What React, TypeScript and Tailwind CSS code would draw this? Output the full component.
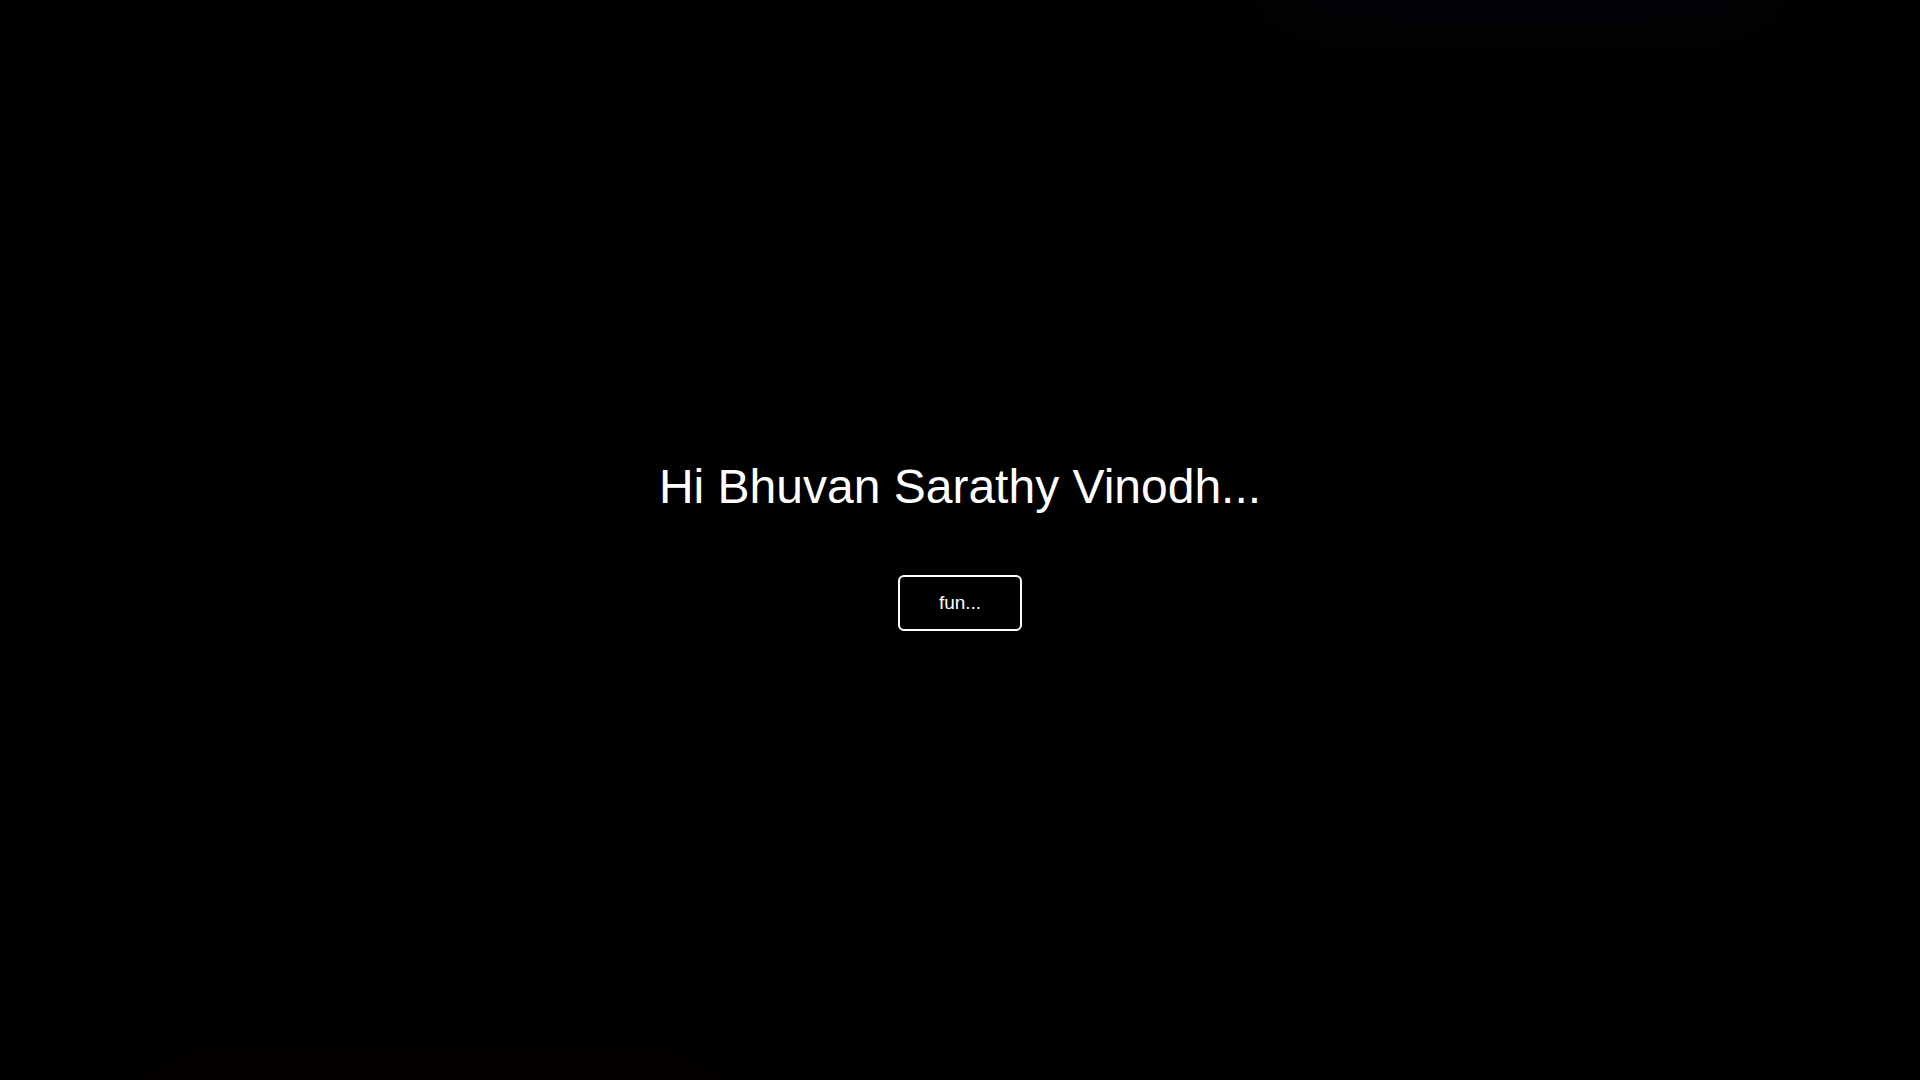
// Landing greeting: one line of text and an outlined button, centred on a black page.

function Backdrop() {
  // faint colour glows that sit behind the content (top right cool, bottom left warm)
  return (
    <div aria-hidden className="pointer-events-none absolute inset-0">
      <div className="absolute left-[1200px] top-[-130px] h-[200px] w-[640px] rounded-full bg-[#0a0a18] opacity-30 blur-[60px]" />
      <div className="absolute bottom-[-120px] left-[80px] h-[180px] w-[700px] rounded-full bg-[#140202] opacity-30 blur-[60px]" />
    </div>
  )
}

export default function App() {
  return (
    <main
      className="relative flex h-screen w-full flex-col items-center justify-center overflow-hidden bg-black pt-[10px] text-white"
      style={{ fontFamily: '"Liberation Sans", Arial, sans-serif' }}
    >
      <Backdrop />
      <div className="relative z-10 flex flex-col items-center">
        <h1 className="text-[48px] font-normal leading-[1.15]">Hi Bhuvan Sarathy Vinodh...</h1>
        <button
          type="button"
          className="mt-[61px] rounded-[6px] border-2 border-white bg-black px-[39px] py-[15px] text-[19px] leading-[1.15] text-white"
        >
          fun...
        </button>
      </div>
    </main>
  )
}
